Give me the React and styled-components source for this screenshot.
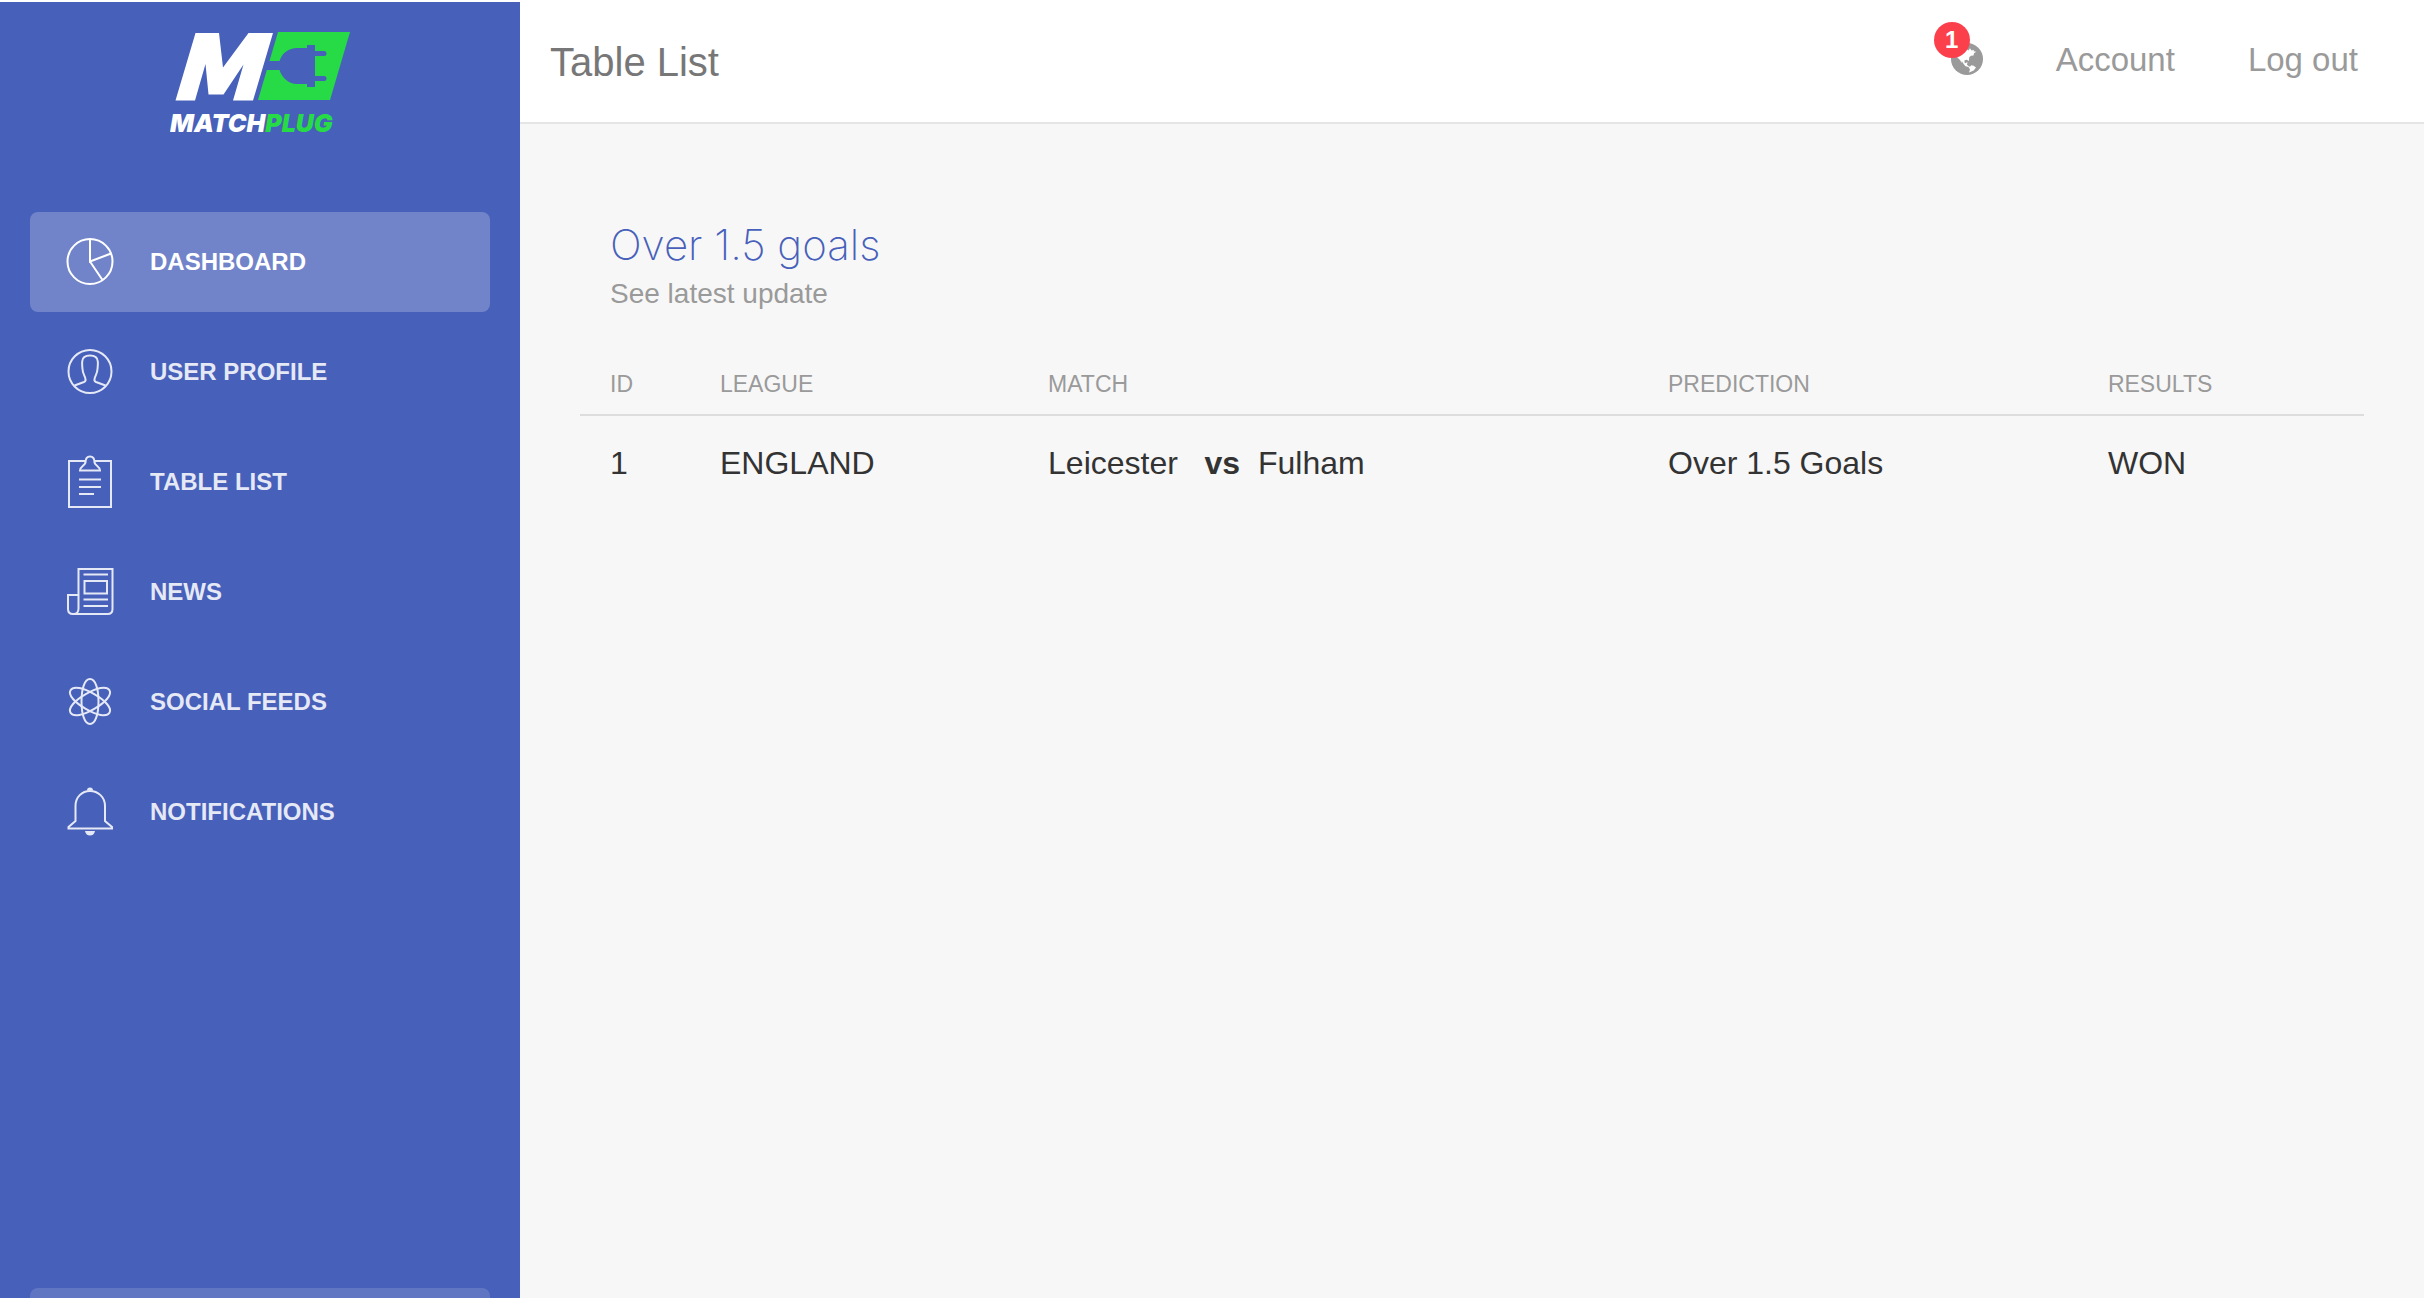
import React from 'react';
import styled, { createGlobalStyle } from 'styled-components';

const GlobalStyle = createGlobalStyle`
    * {
        box-sizing: border-box;
    }
    body {
        margin: 0;
        background-color: #f7f7f7;
        color: #333333;
        font-family: "Liberation Sans", Arial, sans-serif;
    }
    a {
        color: inherit;
        text-decoration: none;
    }
`

const Page = styled.div`
    display: flex;
    min-height: 100vh;
    border-top: 2px solid #ffffff;
`

const Sidebar = styled.aside`
    display: flex;
    flex-direction: column;
    flex: 0 0 520px;
    height: calc(100vh - 2px);
    padding: 0 30px;
    overflow: hidden;
    background-color: #4760ba;
`

const Logo = styled.a`
    display: flex;
    flex-direction: column;
    align-items: center;
    height: 160px;
    padding-top: 30px;
`

const LogoMark = styled.svg`
    display: block;
    width: 180px;
    height: 106px;
`

const NavList = styled.ul`
    display: flex;
    flex-direction: column;
    gap: 10px;
    margin: 50px 0 0;
    padding: 0;
    list-style: none;
`

const NavLink = styled.a`
    display: flex;
    align-items: center;
    gap: 30px;
    height: 100px;
    padding: 0 30px;
    border-radius: 8px;
    color: #ffffff;
    font-size: 24px;
    font-weight: 700;
    line-height: 60px;
    background-color: ${({ $active }) => $active ? 'rgba(255, 255, 255, .23)' : 'transparent'};
    & > * {
        opacity: ${({ $active }) => $active ? 1 : .86};
    }
`

const NavIcon = styled.svg`
    width: 60px;
    height: 60px;
    fill: none;
    stroke: currentColor;
    stroke-width: 2;
`

const UpgradeSlot = styled.div`
    flex: 0 0 100px;
    margin: auto 0 -90px;
    border-radius: 8px;
    background-color: rgba(255, 255, 255, .14);
`

const Main = styled.div`
    flex: 1;
    min-width: 0;
`

const Header = styled.header`
    display: flex;
    align-items: center;
    justify-content: space-between;
    height: 122px;
    padding: 0 66px 0 30px;
    border-bottom: 2px solid #e5e5e5;
    background-color: #ffffff;
`

const PageTitle = styled.h1`
    margin: 0;
    color: #777777;
    font-size: 40px;
    font-weight: 400;
    line-height: 40px;
`

const HeaderNav = styled.nav`
    display: flex;
    align-items: center;
    gap: 73px;
    padding-bottom: 4px;
    color: #9a9a9a;
    font-size: 33px;
    line-height: 40px;
`

const GlobeLink = styled.a`
    position: relative;
    display: flex;
    padding-bottom: 2px;
    & > svg {
        width: 32px;
        height: 32px;
    }
`

const Badge = styled.span`
    position: absolute;
    top: -21px;
    left: -17px;
    width: 36px;
    height: 36px;
    border-radius: 50%;
    background-color: #fb404b;
    color: #ffffff;
    font-size: 24px;
    font-weight: 700;
    line-height: 36px;
    text-align: center;
`

const Content = styled.main`
    padding: 90px 60px;
`

const CardHeader = styled.div`
    padding: 6px 30px 0;
`

const CardTitle = styled.h2`
    margin: 0;
    color: #4760ba;
    font-family: Inter, "Liberation Sans", sans-serif;
    font-size: 42px;
    font-weight: 200;
    line-height: 50px;
`

const CardText = styled.p`
    margin: 0;
    color: #9a9a9a;
    font-size: 28px;
    line-height: 48px;
`

const Table = styled.table`
    width: 100%;
    margin-top: 36px;
    border-collapse: collapse;
    table-layout: fixed;
    text-align: left;
    & th:first-child,
    & td:first-child {
        padding-left: 30px;
    }
`

const Column = styled.col`
    width: ${({ $width }) => $width};
`

const HeadCell = styled.th`
    height: 61px;
    padding: 0 16px;
    border-bottom: 2px solid #dddddd;
    color: #9a9a9a;
    font-size: 23px;
    font-weight: 400;
`

const Cell = styled.td`
    height: 96px;
    padding: 0 16px;
    font-size: 32px;
    white-space: pre;
`

const ORBIT = 'M30 7C35.500 7 38.500 17 38.500 29.500S35.500 52 30 52 21.500 42 21.500 29.500 24.500 7 30 7z'

const ICONS = {
    pie: (
        <>
            <circle cx='30' cy='29.5' r='22.5' />
            <path d='M30 7V29.500L51 21.500M30 29.500l12.500 18.500' />
        </>
    ),
    user: (
        <>
            <circle cx='30' cy='29.5' r='21.5' />
            <path d='M14.500 43.500l9.500-3.500q2-.8 1.500-3c-.5-3-2.800-5-3-10-.4-4-.6-5-.3-7.500C22.500 14.800 26 13.500 30 13.500s7.500 1.300 7.800 6c.3 2.500.1 3.500-.3 7.500-.2 5-2.500 7-3 10q-.5 2.200 1.500 3l9.500 3.500' />
        </>
    ),
    note: (
        <>
            <path d='M25 9H9v46h42V9H35' />
            <path d='M20 18.500c0-4 5-5 5.500-8C25.500 7 27 4.500 30 4.500s4.500 2.500 4.500 6c.5 3 5.500 4 5.500 8z' />
            <path d='M19 27.500h22M19 35h22M19 42h15' />
        </>
    ),
    news: (
        <>
            <path d='M18.500 47V7h34v40q0 5-5 5H13q-5 0-5-5V33h10.500M18.500 46.500q0 5.500-5 5.500' />
            <path d='M23.500 12.500h24.500M24.500 19h22.500v12.500H24.500zM23.500 37.500h24.500M23.500 44h24.500' />
        </>
    ),
    atom: (
        <>
            <path d={ORBIT} />
            <path d={ORBIT} transform='rotate(60 30 29.5)' />
            <path d={ORBIT} transform='rotate(120 30 29.5)' />
        </>
    ),
    bell: (
        <>
            <path d='M8.500 46.500V45l7-6V24c0-9 6.500-15 14.500-15s15 6 15 15v15l7 6v1.500z' />
            <path d='M27 8.500a3 3 0 0 1 6 0zM25 49h10q-1 4.500-5 4.500T25 49z' fill='currentColor' stroke='none' />
        </>
    ),
}

const NAV_ITEMS = [
    { label: 'DASHBOARD', icon: 'pie', active: true },
    { label: 'USER PROFILE', icon: 'user' },
    { label: 'TABLE LIST', icon: 'note' },
    { label: 'NEWS', icon: 'news' },
    { label: 'SOCIAL FEEDS', icon: 'atom' },
    { label: 'NOTIFICATIONS', icon: 'bell' },
]

const COLUMNS = [
    { label: 'ID', width: '6.95%' },
    { label: 'LEAGUE', width: '18.39%' },
    { label: 'MATCH', width: '34.75%' },
    { label: 'PREDICTION', width: '24.66%' },
    { label: 'RESULTS', width: '15.25%' },
]

const MATCHES = [
    { id: 1, league: 'ENGLAND', home: 'Leicester', away: 'Fulham', prediction: 'Over 1.5 Goals', result: 'WON' },
]

const MatchPlugLogo = () => (
    <LogoMark viewBox='0 0 180 106' role='img' aria-label='MatchPlug'>
        <path d='M25.500 1H49l4 34.500L78.500 1H103L83 68.500H63L73.500 32.500 53.500 62.500H38.500L35.500 32 25 68.500H5.500z' fill='#ffffff' />
        <path d='M108 0h72l-20 68H88z' fill='#26db45' />
        <path d='M98 29h11.500C112 21 119 16 127 16h10v-3h8v6h9a2.500 2.500 0 0 1 0 5h-9v20h9a2.500 2.500 0 0 1 0 5h-9v6h-8v-3h-10c-8 0-15-6-17.500-14H96z' fill='#4760ba' />
        <text x='0' y='100' fontFamily='Inter, sans-serif' fontSize='25' fontWeight='900' fontStyle='italic' fill='#ffffff'>
            MATCH<tspan fill='#26db45'>PLUG</tspan>
        </text>
    </LogoMark>
)

const Globe = () => (
    <svg viewBox='0 0 32 32' aria-hidden='true'>
        <circle cx='16' cy='16' r='16' fill='#9a9a9a' />
        <path
            d='M6 8l7-4 4.500 3.500L19 5.300l1.500 2.200 2.500-.8-.5 1.500 2.800.5-2.300 1.500-.5 2.300-2.500.3-1.700 1.500-.5 3.700-2-1.300-2.300.6v2.500l1.500.5.5-1 1 .3-.5 2.200 2 1.700h1.200l1-1.200 2.500.5 2.300 1.700-2.300 3L18 29.500l1-3-1.500-2.500-3-.7-1.500-1.800-2.300-3.500V20L9 17l-3-3z'
            fill='#ffffff'
        />
    </svg>
)

const App = () => {
    return (
        <Page>
            <GlobalStyle />
            <Sidebar>
                <Logo href='#home'>
                    <MatchPlugLogo />
                </Logo>
                <nav>
                    <NavList>
                        {NAV_ITEMS.map(({ label, icon, active }) => (
                            <li key={label}>
                                <NavLink href='#' $active={active}>
                                    <NavIcon viewBox='0 0 60 60' aria-hidden='true'>{ICONS[icon]}</NavIcon>
                                    <span>{label}</span>
                                </NavLink>
                            </li>
                        ))}
                    </NavList>
                </nav>
                <UpgradeSlot />
            </Sidebar>
            <Main>
                <Header>
                    <PageTitle>Table List</PageTitle>
                    <HeaderNav>
                        <GlobeLink href='#notifications' aria-label='1 notification'>
                            <Globe />
                            <Badge>1</Badge>
                        </GlobeLink>
                        <a href='#account'>Account</a>
                        <a href='#logout'>Log out</a>
                    </HeaderNav>
                </Header>
                <Content>
                    <CardHeader>
                        <CardTitle>Over 1.5 goals</CardTitle>
                        <CardText>See latest update</CardText>
                    </CardHeader>
                    <Table>
                        <colgroup>
                            {COLUMNS.map(({ label, width }) => <Column key={label} $width={width} />)}
                        </colgroup>
                        <thead>
                            <tr>
                                {COLUMNS.map(({ label }) => <HeadCell key={label} scope='col'>{label}</HeadCell>)}
                            </tr>
                        </thead>
                        <tbody>
                            {MATCHES.map((match) => (
                                <tr key={match.id}>
                                    <Cell>{match.id}</Cell>
                                    <Cell>{match.league}</Cell>
                                    <Cell>{match.home}{'   '}<b>vs</b>{'  '}{match.away}</Cell>
                                    <Cell>{match.prediction}</Cell>
                                    <Cell>{match.result}</Cell>
                                </tr>
                            ))}
                        </tbody>
                    </Table>
                </Content>
            </Main>
        </Page>
    )
}

export default App
